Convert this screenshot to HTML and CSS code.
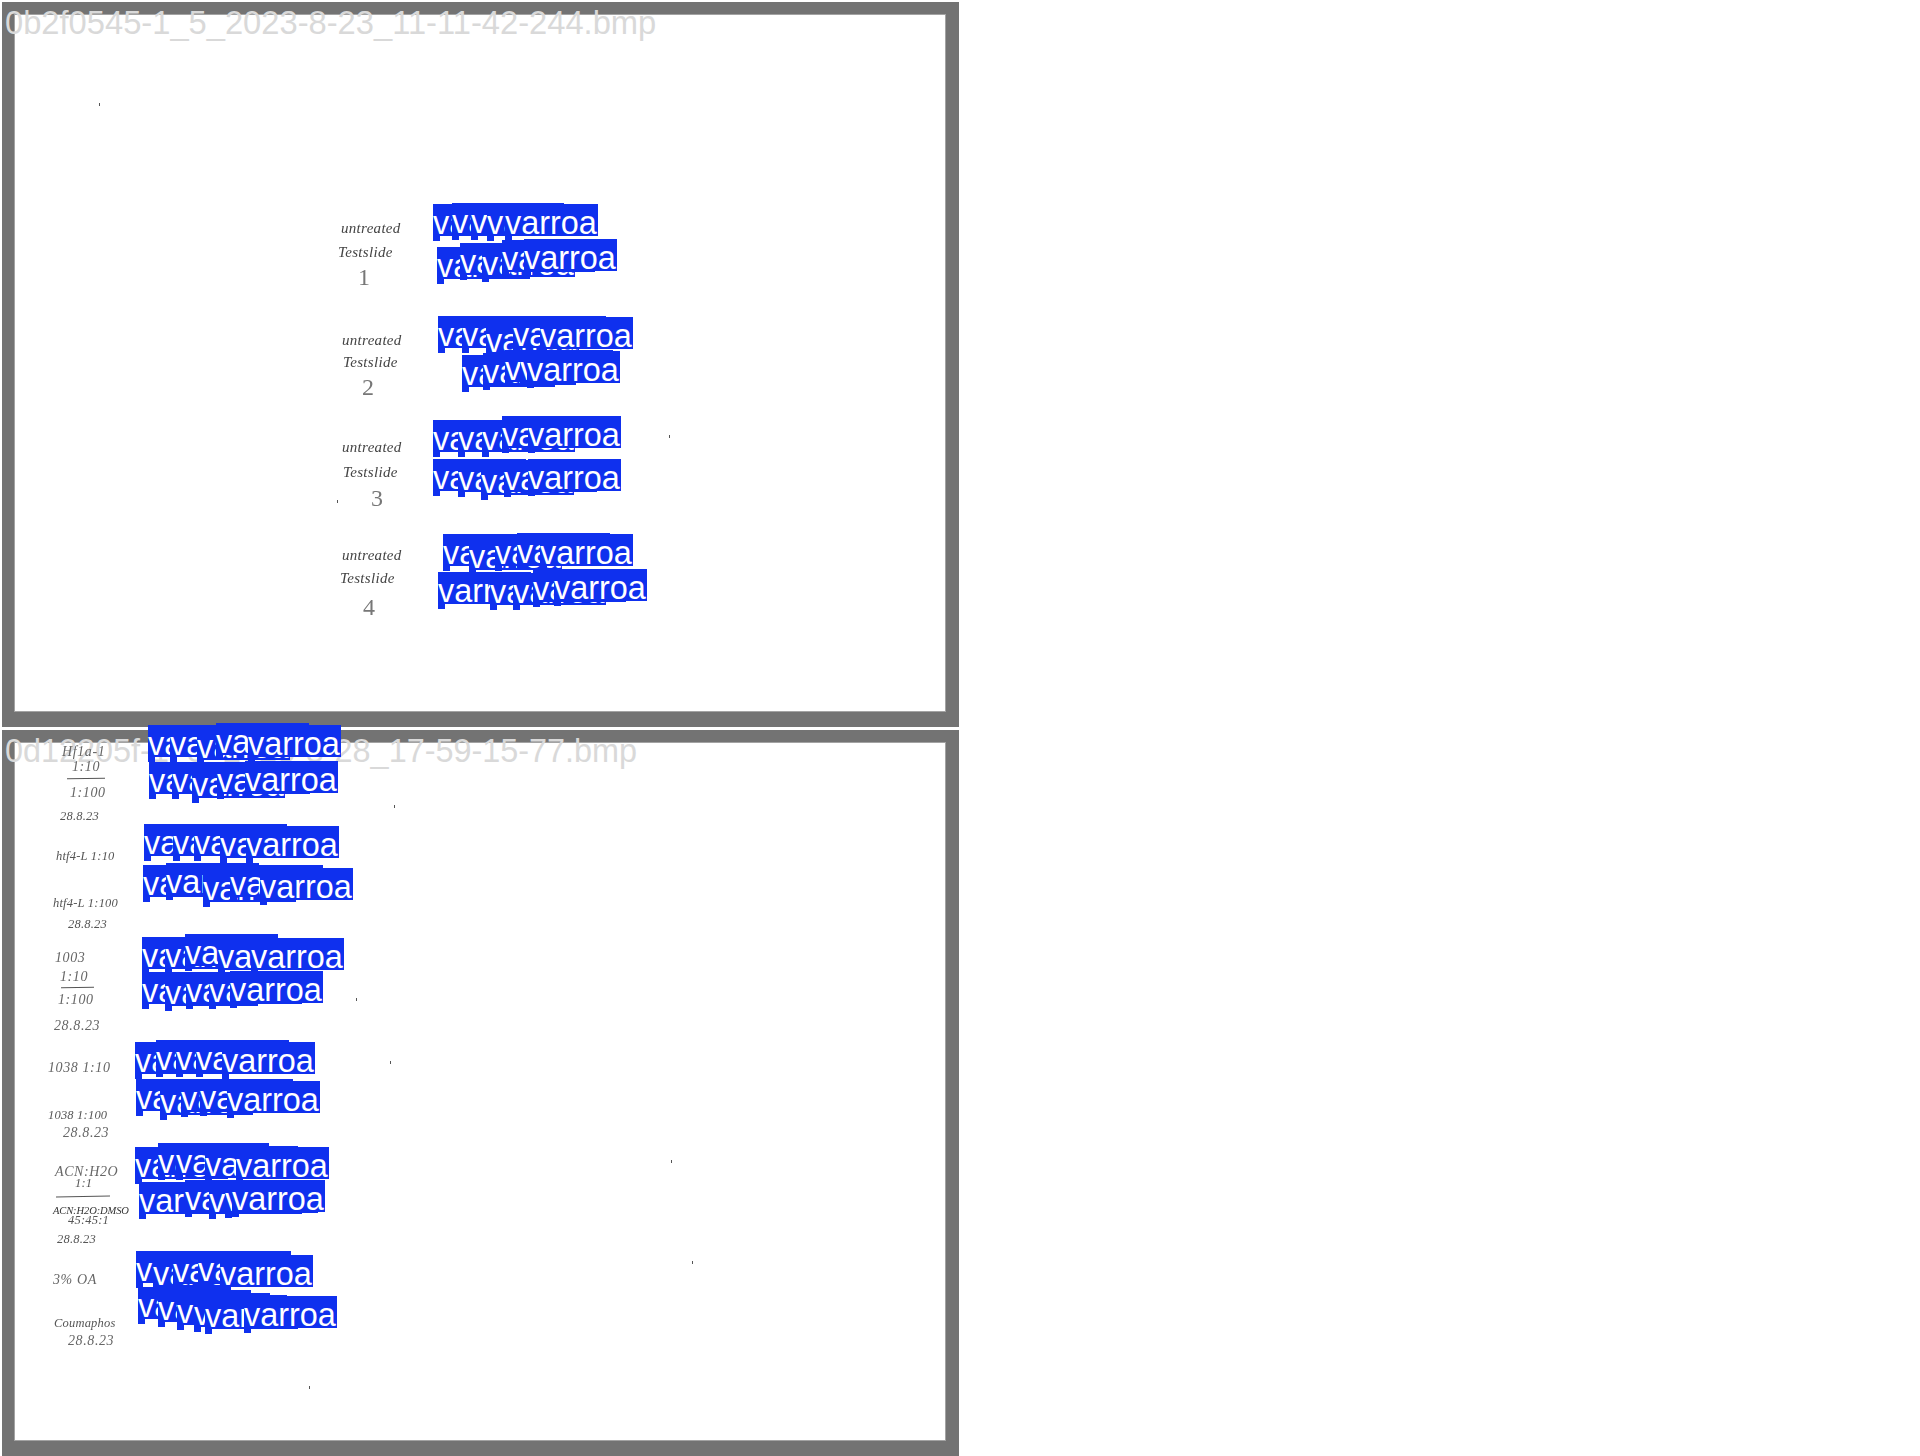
FILE: index.html
```html
<!DOCTYPE html>
<html lang="en">
<head>
<meta charset="utf-8">
<title>varroa annotations</title>
<link rel="stylesheet" href="styles.css">
</head>
<body>
<main class="page">
  <section class="frame frame-a">
    <div class="photo"></div>
    <h2 class="file-name">0b2f0545-1_5_2023-8-23_11-11-42-244.bmp</h2>
  </section>
  <section class="frame frame-b">
    <div class="photo"></div>
    <h2 class="file-name">0d12205f-1_5_2023-8-28_17-59-15-77.bmp</h2>
  </section>

  <div class="overlay">
    <i class="speck" style="left:99px;top:103px"></i>
    <i class="speck" style="left:669px;top:435px"></i>
    <i class="speck" style="left:337px;top:500px"></i>
    <i class="speck" style="left:394px;top:805px"></i>
    <i class="speck" style="left:356px;top:998px"></i>
    <i class="speck" style="left:390px;top:1061px"></i>
    <i class="speck" style="left:671px;top:1160px"></i>
    <i class="speck" style="left:692px;top:1261px"></i>
    <i class="speck" style="left:309px;top:1386px"></i>

    <span class="hand dark" style="left:341px;top:220px">untreated</span>
    <span class="hand dark" style="left:338px;top:244px">Testslide</span>
    <span class="hand dark big" style="left:358px;top:265px">1</span>
    <span class="hand dark" style="left:342px;top:332px">untreated</span>
    <span class="hand dark" style="left:343px;top:354px">Testslide</span>
    <span class="hand dark big" style="left:362px;top:375px">2</span>
    <span class="hand dark" style="left:342px;top:439px">untreated</span>
    <span class="hand dark" style="left:343px;top:464px">Testslide</span>
    <span class="hand dark big" style="left:371px;top:486px">3</span>
    <span class="hand dark" style="left:342px;top:547px">untreated</span>
    <span class="hand dark" style="left:340px;top:570px">Testslide</span>
    <span class="hand dark big" style="left:363px;top:595px">4</span>

    <span class="hand" style="left:62px;top:744px">Hf1a-1</span>
    <span class="hand" style="left:72px;top:759px">1:10</span>
    <i class="rule" style="left:67px;top:778px;width:38px"></i>
    <span class="hand" style="left:70px;top:785px">1:100</span>
    <span class="hand small" style="left:60px;top:808px">28.8.23</span>
    <span class="hand small" style="left:56px;top:848px">htf4-L 1:10</span>
    <span class="hand small" style="left:53px;top:895px">htf4-L 1:100</span>
    <span class="hand small" style="left:68px;top:916px">28.8.23</span>
    <span class="hand" style="left:55px;top:950px">1003</span>
    <span class="hand" style="left:60px;top:969px">1:10</span>
    <i class="rule" style="left:61px;top:987px;width:33px"></i>
    <span class="hand" style="left:58px;top:992px">1:100</span>
    <span class="hand" style="left:54px;top:1018px">28.8.23</span>
    <span class="hand" style="left:48px;top:1060px">1038 1:10</span>
    <span class="hand small" style="left:48px;top:1107px">1038 1:100</span>
    <span class="hand" style="left:63px;top:1125px">28.8.23</span>
    <span class="hand" style="left:55px;top:1164px">ACN:H2O</span>
    <span class="hand small" style="left:75px;top:1175px">1:1</span>
    <i class="rule" style="left:56px;top:1196px;width:54px"></i>
    <span class="hand tiny" style="left:53px;top:1203px">ACN:H2O:DMSO</span>
    <span class="hand small" style="left:68px;top:1212px">45:45:1</span>
    <span class="hand small" style="left:57px;top:1231px">28.8.23</span>
    <span class="hand" style="left:53px;top:1272px">3% OA</span>
    <span class="hand small" style="left:54px;top:1315px">Coumaphos</span>
    <span class="hand" style="left:68px;top:1333px">28.8.23</span>

    <b class="tag" style="left:433px;top:204px">varroa</b><b class="tag" style="left:452px;top:203px">varroa</b><b class="tag" style="left:471px;top:203px">varroa</b><b class="tag" style="left:487px;top:204px">varroa</b><b class="tag" style="left:505px;top:204px">varroa</b>
    <b class="tag" style="left:437px;top:247px">varroa</b><b class="tag" style="left:460px;top:243px">varroa</b><b class="tag" style="left:482px;top:245px">varroa</b><b class="tag" style="left:502px;top:240px">varroa</b><b class="tag" style="left:524px;top:239px">varroa</b>
    <b class="tag" style="left:438px;top:316px">varroa</b><b class="tag" style="left:462px;top:316px">varroa</b><b class="tag" style="left:486px;top:322px">varroa</b><b class="tag" style="left:513px;top:316px">varroa</b><b class="tag" style="left:540px;top:317px">varroa</b>
    <b class="tag" style="left:462px;top:355px">varroa</b><b class="tag" style="left:483px;top:353px">varroa</b><b class="tag" style="left:505px;top:350px">varroa</b><b class="tag" style="left:520px;top:350px">varroa</b><b class="tag" style="left:527px;top:351px">varroa</b>
    <b class="tag" style="left:433px;top:420px">varroa</b><b class="tag" style="left:458px;top:420px">varroa</b><b class="tag" style="left:482px;top:420px">varroa</b><b class="tag" style="left:502px;top:416px">varroa</b><b class="tag" style="left:528px;top:416px">varroa</b>
    <b class="tag" style="left:433px;top:459px">varroa</b><b class="tag" style="left:458px;top:460px">varroa</b><b class="tag" style="left:481px;top:463px">varroa</b><b class="tag" style="left:504px;top:460px">varroa</b><b class="tag" style="left:528px;top:459px">varroa</b>
    <b class="tag" style="left:443px;top:534px">varroa</b><b class="tag" style="left:469px;top:538px">varroa</b><b class="tag" style="left:495px;top:534px">varroa</b><b class="tag" style="left:517px;top:533px">varroa</b><b class="tag" style="left:540px;top:534px">varroa</b>
    <b class="tag" style="left:438px;top:572px">varroa</b><b class="tag" style="left:490px;top:573px">varroa</b><b class="tag" style="left:513px;top:573px">varroa</b><b class="tag" style="left:533px;top:570px">varroa</b><b class="tag" style="left:554px;top:569px">varroa</b>

    <b class="tag" style="left:148px;top:725px">varroa</b><b class="tag" style="left:170px;top:725px">varroa</b><b class="tag" style="left:197px;top:728px">varroa</b><b class="tag" style="left:216px;top:723px">varroa</b><b class="tag" style="left:248px;top:725px">varroa</b>
    <b class="tag" style="left:149px;top:762px">varroa</b><b class="tag" style="left:172px;top:762px">varroa</b><b class="tag" style="left:192px;top:766px">varroa</b><b class="tag" style="left:217px;top:762px">varroa</b><b class="tag" style="left:245px;top:761px">varroa</b>
    <b class="tag" style="left:144px;top:824px">varroa</b><b class="tag" style="left:173px;top:824px">varroa</b><b class="tag" style="left:194px;top:824px">varroa</b><b class="tag" style="left:220px;top:826px">varroa</b><b class="tag" style="left:246px;top:826px">varroa</b>
    <b class="tag" style="left:143px;top:865px">varroa</b><b class="tag" style="left:166px;top:863px">varroa</b><b class="tag" style="left:203px;top:870px">varroa</b><b class="tag" style="left:230px;top:865px">varroa</b><b class="tag" style="left:260px;top:868px">varroa</b>
    <b class="tag" style="left:142px;top:937px">varroa</b><b class="tag" style="left:165px;top:937px">varroa</b><b class="tag" style="left:185px;top:934px">varroa</b><b class="tag" style="left:218px;top:938px">varroa</b><b class="tag" style="left:251px;top:938px">varroa</b>
    <b class="tag" style="left:142px;top:972px">varroa</b><b class="tag" style="left:165px;top:974px">varroa</b><b class="tag" style="left:186px;top:972px">varroa</b><b class="tag" style="left:209px;top:972px">varroa</b><b class="tag" style="left:230px;top:971px">varroa</b>
    <b class="tag" style="left:135px;top:1042px">varroa</b><b class="tag" style="left:156px;top:1040px">varroa</b><b class="tag" style="left:176px;top:1040px">varroa</b><b class="tag" style="left:196px;top:1040px">varroa</b><b class="tag" style="left:222px;top:1042px">varroa</b>
    <b class="tag" style="left:136px;top:1079px">varroa</b><b class="tag" style="left:160px;top:1083px">varroa</b><b class="tag" style="left:181px;top:1080px">varroa</b><b class="tag" style="left:200px;top:1079px">varroa</b><b class="tag" style="left:227px;top:1081px">varroa</b>
    <b class="tag" style="left:135px;top:1147px">varroa</b><b class="tag" style="left:158px;top:1143px">varroa</b><b class="tag" style="left:176px;top:1143px">varroa</b><b class="tag" style="left:205px;top:1146px">varroa</b><b class="tag" style="left:236px;top:1147px">varroa</b>
    <b class="tag" style="left:139px;top:1182px">varroa</b><b class="tag" style="left:185px;top:1180px">varroa</b><b class="tag" style="left:209px;top:1182px">varroa</b><b class="tag" style="left:225px;top:1181px">varroa</b><b class="tag" style="left:232px;top:1180px">varroa</b>
    <b class="tag" style="left:136px;top:1251px">varroa</b><b class="tag" style="left:153px;top:1255px">varroa</b><b class="tag" style="left:173px;top:1252px">varroa</b><b class="tag" style="left:198px;top:1251px">varroa</b><b class="tag" style="left:220px;top:1255px">varroa</b>
    <b class="tag" style="left:138px;top:1287px">varroa</b><b class="tag" style="left:158px;top:1290px">varroa</b><b class="tag" style="left:177px;top:1293px">varroa</b><b class="tag" style="left:194px;top:1295px">varroa</b><b class="tag" style="left:205px;top:1297px">varroa</b><b class="tag" style="left:244px;top:1296px">varroa</b>
  </div>
</main>
</body>
</html>
```

FILE: styles.css
```css
html, body {
  margin: 0;
  background: #fff;
}

.page {
  position: relative;
  display: flex;
  flex-direction: column;
  gap: 3px;
  width: 1920px;
  height: 1456px;
  padding: 2px 0 0 2px;
  box-sizing: border-box;
  overflow: hidden;
  font-family: "Liberation Sans", Arial, sans-serif;
}

.frame {
  position: relative;
  display: flex;
  flex: none;
  width: 957px;
  padding: 13px 14px 16px 13px;
  box-sizing: border-box;
  background: #737373;
}

.frame-a { height: 725px; }
.frame-b { height: 726px; }

.photo {
  flex: 1;
  background: #fff;
  box-shadow: 0 0 0 1px #a3a3a3;
}

.file-name {
  position: absolute;
  left: 3px;
  top: 3px;
  margin: 0;
  font-size: 32.7px;
  line-height: 36px;
  font-weight: 400;
  white-space: nowrap;
  color: #d9d9d9;
}

.frame-b .file-name { font-size: 32.4px; }

.overlay {
  position: absolute;
  inset: 0;
}

.speck {
  position: absolute;
  width: 1px;
  height: 3px;
  background: #555;
}

.rule {
  position: absolute;
  height: 1px;
  background: #555;
  transform: rotate(-1deg);
}

.hand {
  position: absolute;
  font-family: "Liberation Serif", "Times New Roman", serif;
  font-style: italic;
  font-size: 14px;
  line-height: 16px;
  letter-spacing: 0.6px;
  white-space: nowrap;
  color: #666;
  filter: blur(0.4px);
}

.hand.dark {
  font-size: 15px;
  letter-spacing: 0.3px;
  color: #444;
}

.hand.big {
  font-size: 24px;
  line-height: 24px;
  font-style: normal;
  color: #777;
}

.hand.small {
  font-size: 12.5px;
  letter-spacing: 0.2px;
  color: #555;
}

.hand.tiny {
  font-size: 10.5px;
  letter-spacing: -0.1px;
  color: #333;
}

.tag {
  position: absolute;
  display: block;
  height: 32px;
  padding-right: 1px;
  background: #0f30ee;
  color: #fff;
  font-size: 32.4px;
  font-weight: 400;
  line-height: 38px;
}

.tag::after {
  content: "";
  position: absolute;
  left: 0;
  top: 100%;
  width: 7px;
  height: 5px;
  background: #0f30ee;
}
```
